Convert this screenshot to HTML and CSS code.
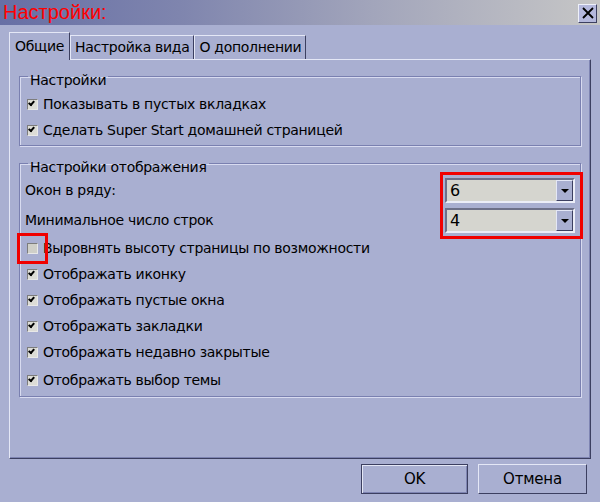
FILE: index.html
```html
<!DOCTYPE html>
<html lang="ru">
<head>
<meta charset="utf-8">
<link rel="stylesheet" href="styles.css">
</head>
<body>
<div class="window">
  <div class="titlebar">
    <span class="title">Настройки:</span>
    <button class="close" aria-label="Закрыть">
      <svg width="12" height="12" viewBox="0 0 12 12"><path d="M1 1 L11 11 M11 1 L1 11" stroke="#000" stroke-width="1.8"/></svg>
    </button>
  </div>
  <div class="content">
    <div class="tabs">
      <div class="tab active">Общие</div>
      <div class="tab">Настройка вида</div>
      <div class="tab">О дополнении</div>
    </div>
    <div class="panel">
      <fieldset class="group g1">
        <legend>Настройки</legend>
        <label class="check-row"><span class="cb checked"></span>Показывать в пустых вкладках</label>
        <label class="check-row"><span class="cb checked"></span>Сделать Super Start домашней страницей</label>
      </fieldset>
      <fieldset class="group g2">
        <legend>Настройки отображения</legend>
        <div class="select-row">
          <span>Окон в ряду:</span>
          <div class="select"><span class="val">6</span><span class="arrow"></span></div>
        </div>
        <div class="select-row">
          <span>Минимальное число строк</span>
          <div class="select"><span class="val">4</span><span class="arrow"></span></div>
        </div>
        <label class="check-row"><span class="cb"></span>Выровнять высоту страницы по возможности</label>
        <label class="check-row"><span class="cb checked"></span>Отображать иконку</label>
        <label class="check-row"><span class="cb checked"></span>Отображать пустые окна</label>
        <label class="check-row"><span class="cb checked"></span>Отображать закладки</label>
        <label class="check-row"><span class="cb checked"></span>Отображать недавно закрытые</label>
        <label class="check-row last"><span class="cb checked"></span>Отображать выбор темы</label>
      </fieldset>
    </div>
    <div class="buttons">
      <button class="btn default">OK</button>
      <button class="btn">Отмена</button>
    </div>
  </div>
  <div class="highlight hl-selects"></div>
  <div class="highlight hl-check"></div>
</div>
</body>
</html>
```
FILE: styles.css
```css
html, body {
  margin: 0;
  padding: 0;
}
body {
  font-family: "DejaVu Sans", "Liberation Sans", sans-serif;
  font-size: 14px;
  letter-spacing: -0.3px;
  color: #000;
}
.window {
  position: relative;
  width: 600px;
  height: 502px;
  background: #a9afd1;
  overflow: hidden;
}
.titlebar {
  height: 25px;
  display: flex;
  align-items: center;
  justify-content: space-between;
  padding: 0 3px 0 3px;
  background: linear-gradient(to right, #676fa5 0%, #7f85ae 30%, #a2a5bb 62%, #c6c6c6 100%);
}
.title {
  font-family: "Liberation Sans", Arial, sans-serif;
  font-size: 20px;
  letter-spacing: 0;
  color: #ff0000;
  line-height: 25px;
}
.close {
  width: 19px;
  height: 19px;
  padding: 0;
  margin-top: 1px;
  display: flex;
  align-items: center;
  justify-content: center;
  background: #b4b8dc;
  border: 1px solid;
  border-color: #eef0fa #3c3f60 #3c3f60 #eef0fa;
}
.content {
  padding: 7px 9px 0 9px;
}
.tabs {
  display: flex;
  align-items: flex-end;
  height: 27px;
  position: relative;
  z-index: 1;
}
.tab {
  height: 23px;
  line-height: 22px;
  padding: 0 4px 0 4px;
  border-top: 1px solid #e4e7f6;
  border-left: 1px solid #e4e7f6;
  border-right: 1px solid #3c3f60;
  box-sizing: content-box;
  background: #a9afd1;
  white-space: nowrap;
}
.tab.active {
  height: 27px;
  line-height: 26px;
  padding: 0 5px 0 5px;
  margin-bottom: -1px;
}
.panel {
  height: 394px;
  padding: 4px 9px 0 9px;
  border-top: 1px solid #e4e7f6;
  border-left: 1px solid #e4e7f6;
  border-right: 1px solid #3c3f60;
  border-bottom: 1px solid #3c3f60;
  box-shadow: inset -1px -1px 0 #7e84b2;
  box-sizing: content-box;
}
.group {
  margin: 0;
  padding: 0 5px 2px 5px;
  border: 1px solid #7a80b0;
  box-shadow: 1px 1px 0 #d8dbf0, inset 1px 1px 0 #d8dbf0;
  min-width: 0;
}
.group legend {
  padding: 8px 2px 0 2px;
  margin-left: 3px;
  line-height: 16px;
}
.g1 {
  padding-top: 3px;
}
.g2 {
  margin-top: 5px;
}
.check-row {
  display: flex;
  align-items: center;
  height: 26px;
  white-space: nowrap;
}
.check-row.last {
  height: 29px;
  padding-top: 1px;
  box-sizing: border-box;
}
.cb {
  width: 9px;
  height: 9px;
  margin-left: 2px;
  margin-right: 5px;
  border: 1px solid;
  border-color: #7c7c7c #e8e8e8 #e8e8e8 #7c7c7c;
  background: #cfcfc8;
  position: relative;
  flex: none;
}
.cb.checked {
  background: #dcdcd6;
}
.cb.checked::after {
  content: "";
  position: absolute;
  left: 1px;
  top: 1px;
  width: 4px;
  height: 2px;
  border-left: 2px solid #000;
  border-bottom: 2px solid #000;
  transform: rotate(-50deg);
  transform-origin: 40% 60%;
}
.select-row {
  display: flex;
  align-items: center;
  justify-content: space-between;
  height: 30px;
}
.select {
  width: 126px;
  height: 21px;
  display: flex;
  border: 2px solid;
  border-color: #6c6f88 #eceef8 #eceef8 #6c6f88;
  background: #d5d5cf;
}
.select .val {
  flex: 1;
  padding-left: 3px;
  line-height: 21px;
  font-size: 16px;
}
.select .arrow {
  width: 15px;
  height: 19px;
  background: #a9afd1;
  border: 1px solid;
  border-color: #e4e7f6 #3c3f60 #3c3f60 #e4e7f6;
  display: flex;
  align-items: center;
  justify-content: center;
}
.select .arrow::before {
  content: "";
  border-left: 4px solid transparent;
  border-right: 4px solid transparent;
  border-top: 4px solid #000;
  margin-top: 2px;
}
.buttons {
  display: flex;
  justify-content: flex-end;
  gap: 10px;
  margin-top: 5px;
  padding-right: 4px;
}
.btn {
  font-family: "DejaVu Sans", "Liberation Sans", sans-serif;
  font-size: 15px;
  letter-spacing: -0.2px;
  width: 109px;
  height: 30px;
  padding: 0;
  background: #a9afd1;
  border: 1px solid;
  border-color: #e4e7f6 #3c3f60 #3c3f60 #e4e7f6;
  color: #000;
}
.btn.default {
  width: 107px;
  border: 1px solid #3c3f60;
  box-shadow: inset 1px 1px 0 #e4e7f6, inset -1px -1px 0 #7e84b2;
}
.highlight {
  position: absolute;
  border: 3px solid #f00000;
  box-sizing: border-box;
}
.hl-selects {
  left: 440px;
  top: 172px;
  width: 143px;
  height: 67px;
}
.hl-check {
  left: 17px;
  top: 233px;
  width: 31px;
  height: 31px;
}
```
